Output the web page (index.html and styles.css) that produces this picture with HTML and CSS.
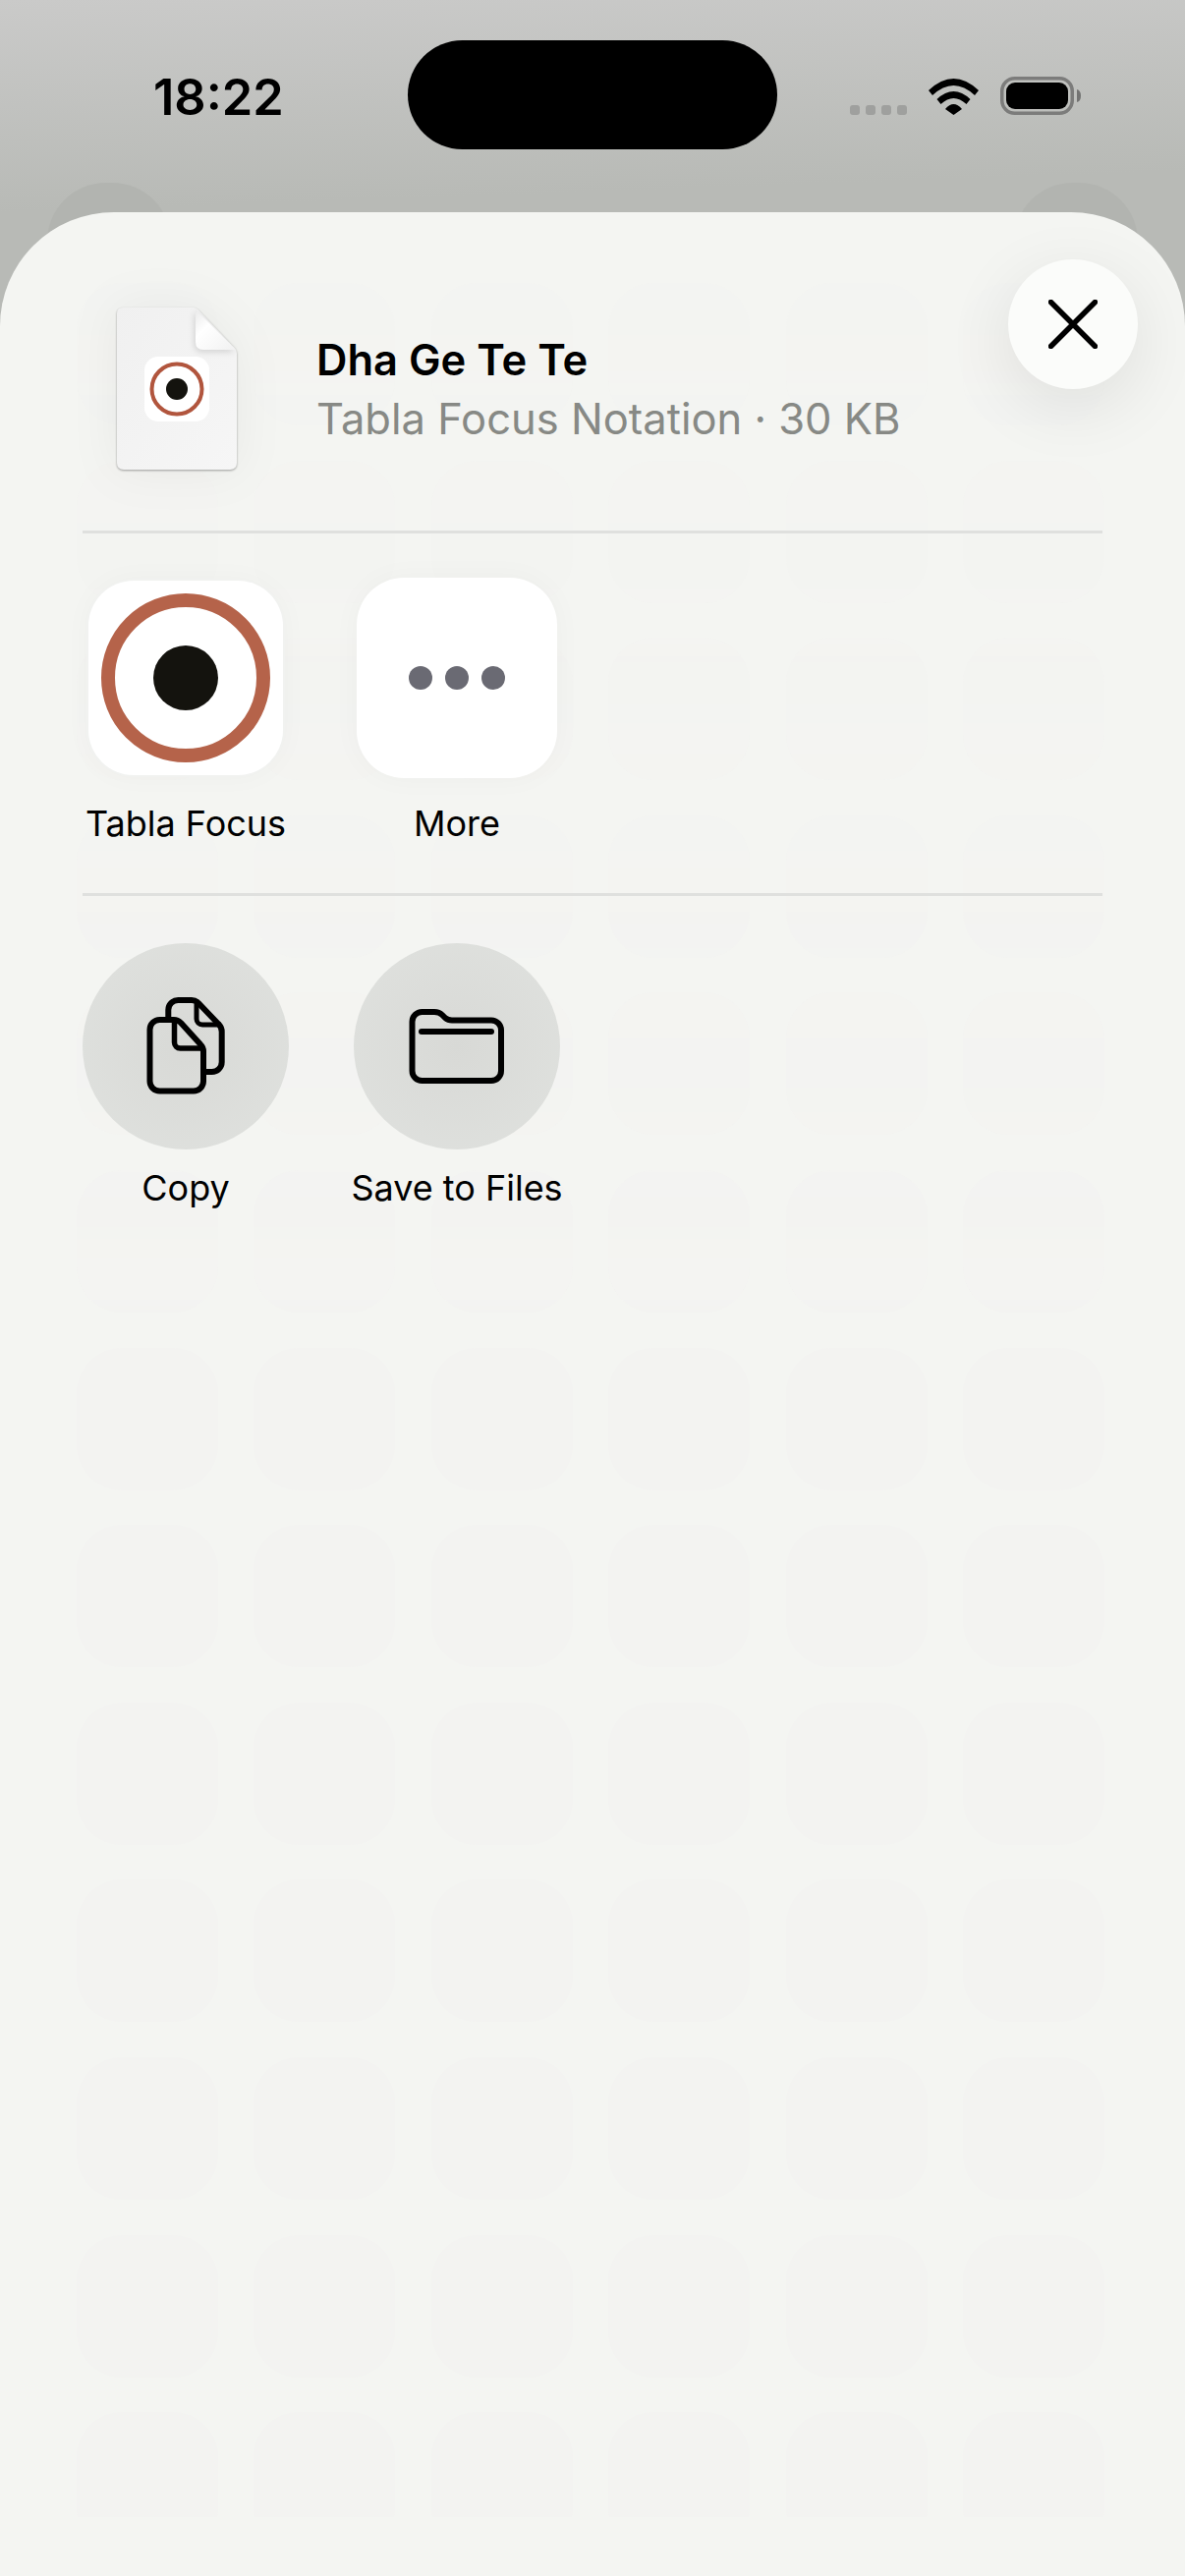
FILE: index.html
```html
<!DOCTYPE html>
<html>
<head>
<meta charset="utf-8">
<title>Share sheet</title>
<link rel="stylesheet" href="styles.css">
</head>
<body>
<div class="phone">
  <div class="peek peek-left"></div>
  <div class="peek peek-right"></div>

  <div class="status">
    <div class="time">18:22</div>
    <div class="island"></div>
    <div class="status-icons">
      <div class="signal"><i></i><i></i><i></i><i></i></div>
      <svg class="wifi" width="51" height="37" viewBox="0 0 51 37">
        <path d="M0 12Q25.5-12 51 12L47 17Q25.5-3 4 17Z"/>
        <path d="M8.5 21Q25.5 5 42.5 21L38.5 26Q25.5 14 12.5 26Z"/>
        <path d="M17 31Q25.5 21 34 31L25.5 37Z"/>
      </svg>
      <svg class="battery" width="82" height="39" viewBox="0 0 82 39">
        <rect x="1.75" y="1.75" width="71.5" height="35.5" rx="13" fill="none" stroke="#7c7c7b" stroke-width="3.5"/>
        <rect x="6" y="6" width="63" height="27" rx="9" fill="#000"/>
        <path d="M78 13q4 1 4 6.500t-4 6.500Z" fill="#737372"/>
      </svg>
    </div>
  </div>

  <div class="sheet">
    <div class="tiles">
      <i></i><i></i><i></i><i></i><i></i><i></i>
      <i></i><i></i><i></i><i></i><i></i><i></i>
      <i></i><i></i><i></i><i></i><i></i><i></i>
      <i></i><i></i><i></i><i></i><i></i><i></i>
      <i></i><i></i><i></i><i></i><i></i><i></i>
      <i></i><i></i><i></i><i></i><i></i><i></i>
      <i></i><i></i><i></i><i></i><i></i><i></i>
      <i></i><i></i><i></i><i></i><i></i><i></i>
      <i></i><i></i><i></i><i></i><i></i><i></i>
      <i></i><i></i><i></i><i></i><i></i><i></i>
      <i></i><i></i><i></i><i></i><i></i><i></i>
      <i></i><i></i><i></i><i></i><i></i><i></i>
      <i></i><i></i><i></i><i></i><i></i><i></i>
    </div>

    <button class="close" aria-label="Close">
      <svg width="50" height="50" viewBox="0 0 50 50">
        <path d="M2.500 2.500L47.500 47.500M47.500 2.500L2.500 47.500" stroke="#000" stroke-width="5.500" stroke-linecap="round"/>
      </svg>
    </button>

    <div class="file">
      <svg class="doc" width="122" height="165" viewBox="0 0 122 165">
        <defs>
          <linearGradient id="paper" x1="0" y1="0" x2="1" y2="1">
            <stop offset="0" stop-color="#f0f0f0"/>
            <stop offset="1" stop-color="#f6f6f6"/>
          </linearGradient>
          <linearGradient id="fold" x1="0" y1="0" x2="1" y2="1">
            <stop offset="0" stop-color="#e9e9e9"/>
            <stop offset="0.35" stop-color="#ffffff"/>
            <stop offset="1" stop-color="#f1f1f1"/>
          </linearGradient>
        </defs>
        <path d="M6 0H78Q81 0 83 2.500L119.500 41Q122 43.500 122 47V158Q122 165 115 165H7Q0 165 0 158V6Q0 0 6 0Z" fill="url(#paper)"/>
        <path class="doc-fold" d="M80 2L121 43H88Q80 43 80 35Z" fill="url(#fold)"/>
        <rect x="28" y="50" width="66" height="66" rx="14" fill="#fff"/>
        <circle cx="61" cy="83" r="25.500" fill="none" stroke="#b1553d" stroke-width="4"/>
        <circle cx="61" cy="83" r="11" fill="#14130e"/>
      </svg>
      <div class="file-text">
        <div class="file-name">Dha Ge Te Te</div>
        <div class="file-meta">Tabla Focus Notation · 30 KB</div>
      </div>
    </div>

    <div class="divider divider-file"></div>

    <div class="row row-apps">
      <div class="item">
        <div class="icon-slot">
          <div class="app-icon tabla"><span class="ring"><span class="pupil"></span></span></div>
        </div>
        <div class="label">Tabla Focus</div>
      </div>
      <div class="item">
        <div class="icon-slot">
          <div class="app-icon more"><i></i><i></i><i></i></div>
        </div>
        <div class="label">More</div>
      </div>
    </div>

    <div class="divider"></div>

    <div class="row row-actions">
      <div class="item">
        <div class="action">
          <svg width="210" height="210" viewBox="0 0 210 210" fill="none" stroke="#000" stroke-width="6" stroke-linejoin="round">
            <path d="M87.300 75V68A10 10 0 0 1 97.300 58H111Q115 58 118 61L139 83Q141.700 86 141.700 90V121A10 10 0 0 1 131.700 131H124"/>
            <path d="M116 59V77A6 6 0 0 0 122 83H141" stroke-width="5"/>
            <path d="M93 78H78.500A10 10 0 0 0 68.500 88V140.500A10 10 0 0 0 78.500 150.500H113A10 10 0 0 0 123 140.500V110Q123 106 120 103L100 81Q97 78 93 78Z"/>
            <path d="M93.500 79V101A6 6 0 0 0 99.500 107H122" stroke-width="5.500"/>
          </svg>
        </div>
        <div class="label">Copy</div>
      </div>
      <div class="item">
        <div class="action">
          <svg width="210" height="210" viewBox="0 0 210 210" fill="none" stroke="#000" stroke-width="6" stroke-linejoin="round">
            <path d="M59.500 130V80A10 10 0 0 1 69.500 70H82Q87 70 90 73L93 76Q96 78.500 100 78.500H140A10 10 0 0 1 150 88.500V130A10 10 0 0 1 140 140H69.500A10 10 0 0 1 59.500 130Z"/>
            <path d="M69 90H140" stroke-linecap="round"/>
          </svg>
        </div>
        <div class="label">Save to Files</div>
      </div>
    </div>
  </div>
</div>
</body>
</html>
```

FILE: styles.css
```css
* {
    box-sizing: border-box;
}
html, body {
    margin: 0;
    padding: 0;
}
body {
    width: 1206px;
    height: 2622px;
    overflow: hidden;
    font-family: "Inter", "Liberation Sans", sans-serif;
    color: #000;
}
.phone {
    position: relative;
    width: 1206px;
    height: 2622px;
    display: flex;
    flex-direction: column;
    background: linear-gradient(178deg, #cacac9 0, #b8bab6 216px);
}

/* blurred home screen icons behind the sheet */
.peek {
    position: absolute;
    top: 186px;
    width: 126px;
    height: 100px;
    border-radius: 60px 60px 0 0;
    background: #b2b4b0;
}
.peek-left {
    left: 48px;
}
.peek-right {
    left: 1032px;
}

/* status bar */
.status {
    position: relative;
    height: 216px;
    flex: none;
    display: flex;
    align-items: flex-start;
    padding: 41px 0 0 156px;
}
.time {
    width: 131px;
    margin-top: 28px;
    font-size: 50.5px;
    line-height: 59px;
    font-weight: 600;
    white-space: nowrap;
}
.island {
    width: 376px;
    height: 111px;
    margin-left: 128px;
    border-radius: 56px;
    background: #000;
}
.status-icons {
    display: flex;
    align-items: flex-end;
    gap: 22px;
    margin-left: 74px;
    margin-top: 37px;
}
.signal {
    display: flex;
    gap: 6px;
}
.signal i {
    width: 10px;
    height: 10px;
    border-radius: 3px;
    background: #9fa09e;
}

/* sheet */
.sheet {
    position: relative;
    flex: 1;
    padding-top: 97px;
    border-radius: 116px 116px 0 0;
    background: #f4f5f2;
    overflow: hidden;
}
.tiles {
    position: absolute;
    top: 72px;
    left: 78px;
    width: 1046px;
    height: 2274px;
    overflow: hidden;
    display: grid;
    grid-template-columns: repeat(6, 144px);
    grid-auto-rows: 145px;
    gap: 35.6px 36.400px;
    -webkit-mask-image: linear-gradient(rgba(0, 0, 0, 0.3) 0, #000 1100px);
    mask-image: linear-gradient(rgba(0, 0, 0, 0.3) 0, #000 1100px);
}
.tiles i {
    border-radius: 46px;
    background: #f3f3f1;
}
.close {
    position: absolute;
    top: 48px;
    left: 1026px;
    width: 132px;
    height: 132px;
    padding: 0;
    display: flex;
    align-items: center;
    justify-content: center;
    border: 0;
    border-radius: 50%;
    background: #fbfcfa;
    box-shadow: 0 18px 70px rgba(0, 0, 0, 0.09);
}

.file {
    position: relative;
    display: flex;
    align-items: flex-start;
    gap: 81px;
    padding-left: 119px;
    height: 165px;
}
.doc {
    flex: none;
    filter: drop-shadow(0 1px 1px rgba(0, 0, 0, 0.35)) drop-shadow(0 0 24px rgba(0, 0, 0, 0.05));
}
.doc-fold {
    filter: drop-shadow(-1px 2px 3px rgba(0, 0, 0, 0.14));
}
.file-name {
    margin-top: 27px;
    font-size: 43.5px;
    line-height: 52px;
    font-weight: 600;
}
.file-meta {
    margin-top: 8px;
    font-size: 43.5px;
    line-height: 52px;
    color: #878985;
}

.divider {
    position: relative;
    height: 3px;
    margin: 0 84px;
    background: #dfe0de;
}
.divider-file {
    margin-top: 62px;
}

.row {
    position: relative;
    display: flex;
    gap: 66px;
    padding-left: 84px;
}
.row-apps {
    padding-top: 45px;
    height: 366px;
}
.row-actions {
    padding-top: 48px;
}
.item {
    width: 210px;
    display: flex;
    flex-direction: column;
    align-items: center;
}
.label {
    font-size: 36px;
    line-height: 44px;
    white-space: nowrap;
}
.row-apps .label {
    margin-top: 24px;
}
.row-actions .label {
    margin-top: 17px;
}
.icon-slot {
    width: 204px;
    height: 204px;
    display: flex;
    align-items: center;
    justify-content: center;
}
.app-icon {
    display: flex;
    align-items: center;
    justify-content: center;
    background: #fff;
}
.tabla {
    width: 198px;
    height: 198px;
    border-radius: 46px;
    box-shadow: 0 0 0 2px #f1f2f0, 0 0 30px rgba(0, 0, 0, 0.03);
}
.ring {
    width: 172px;
    height: 172px;
    display: flex;
    align-items: center;
    justify-content: center;
    border: 14px solid #b5634a;
    border-radius: 50%;
}
.pupil {
    width: 66px;
    height: 66px;
    border-radius: 50%;
    background: #14130e;
}
.more {
    width: 204px;
    height: 204px;
    gap: 13px;
    border-radius: 48px;
    box-shadow: 0 0 30px rgba(0, 0, 0, 0.03);
}
.more i {
    width: 24px;
    height: 24px;
    border-radius: 50%;
    background: #6a6a73;
}
.action {
    width: 210px;
    height: 210px;
    border-radius: 50%;
    background: radial-gradient(circle, #d8d9d6 0, #e0e2df 100%);
}
.action svg {
    display: block;
}
```
